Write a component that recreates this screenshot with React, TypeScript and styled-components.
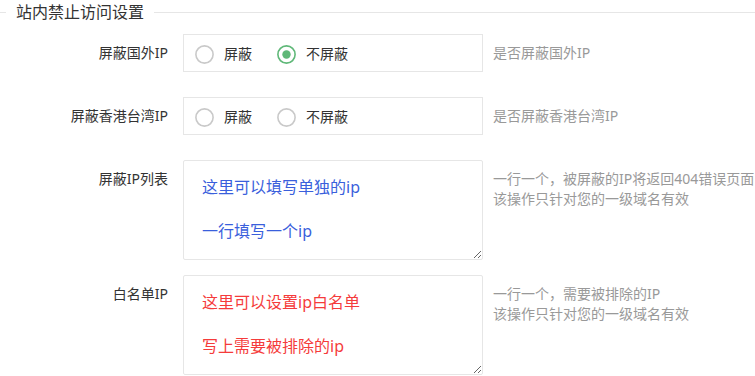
import * as React from "react";
import styled, { createGlobalStyle } from "styled-components";

const GlobalStyle = createGlobalStyle`
  body {
    margin: 0;
    background: #fff;
    font-family: "Noto Sans", "Noto Sans CJK SC", sans-serif;
  }
`;

const Fieldset = styled.fieldset`
  margin: 0;
  padding: 10px 0 0 0;
  border: none;
  border-top: 1px solid #e6e6e6;
  width: 755px;
  box-sizing: border-box;
`;

const Legend = styled.legend`
  margin-left: 6px;
  padding: 0 10px;
  font-size: 16px;
  line-height: 24px;
  color: #333;
`;

const FormItem = styled.div<{ $gap: number }>`
  display: flex;
  align-items: flex-start;
  margin-bottom: ${(p) => p.$gap}px;
`;

const Label = styled.label`
  width: 183px;
  box-sizing: border-box;
  flex-shrink: 0;
  padding: 9px 15px 9px 0;
  text-align: right;
  font-size: 14px;
  line-height: 20px;
  color: #333;
`;

const RadioBox = styled.div`
  width: 300px;
  height: 38px;
  box-sizing: border-box;
  border: 1px solid #e6e6e6;
  display: flex;
  align-items: center;
  padding: 2px 0 0 11px;
`;

const RadioOption = styled.span`
  display: inline-flex;
  align-items: center;
  gap: 10px;
  margin-right: 25px;
  font-size: 14px;
  line-height: 20px;
  color: #333;
  cursor: pointer;
`;

const Hint = styled.div`
  margin-left: 10px;
  padding: 9px 0;
  font-size: 14px;
  line-height: 20px;
  color: #999;
  white-space: nowrap;
`;

const TextArea = styled.textarea<{ $color: string }>`
  width: 300px;
  height: 100px;
  box-sizing: border-box;
  border: 1px solid #e6e6e6;
  border-radius: 2px;
  padding: 15px 18px;
  margin: 0;
  font-family: "Noto Sans", "Noto Sans CJK SC", sans-serif;
  font-size: 16px;
  line-height: 22px;
  color: ${(p) => p.$color};
  outline: none;
  display: block;
`;

const RadioIcon = ({ checked }: { checked?: boolean }) => (
  <svg width="19" height="19" viewBox="0 0 19 19">
    <circle
      cx="9.5"
      cy="9.5"
      r="8.6"
      fill="none"
      stroke={checked ? "#5FB878" : "#c9c9c9"}
      strokeWidth="1.6"
    />
    {checked && <circle cx="9.5" cy="9.5" r="4.2" fill="#5FB878" />}
  </svg>
);

const Radio = ({ label, checked }: { label: string; checked?: boolean }) => (
  <RadioOption>
    <RadioIcon checked={checked} />
    {label}
  </RadioOption>
);

const App = () => {
  return (
    <>
      <GlobalStyle />
      <Fieldset>
        <Legend>站内禁止访问设置</Legend>
        <FormItem $gap={25}>
          <Label>屏蔽国外IP</Label>
          <RadioBox>
            <Radio label="屏蔽" />
            <Radio label="不屏蔽" checked />
          </RadioBox>
          <Hint>是否屏蔽国外IP</Hint>
        </FormItem>
        <FormItem $gap={25}>
          <Label>屏蔽香港台湾IP</Label>
          <RadioBox>
            <Radio label="屏蔽" />
            <Radio label="不屏蔽" />
          </RadioBox>
          <Hint>是否屏蔽香港台湾IP</Hint>
        </FormItem>
        <FormItem $gap={15}>
          <Label>屏蔽IP列表</Label>
          <TextArea
            $color="#3a5fdc"
            defaultValue={"这里可以填写单独的ip\n\n一行填写一个ip"}
          />
          <Hint>
            一行一个，被屏蔽的IP将返回404错误页面
            <br />
            该操作只针对您的一级域名有效
          </Hint>
        </FormItem>
        <FormItem $gap={0}>
          <Label>白名单IP</Label>
          <TextArea
            $color="#f53b3b"
            defaultValue={"这里可以设置ip白名单\n\n写上需要被排除的ip"}
          />
          <Hint>
            一行一个，需要被排除的IP
            <br />
            该操作只针对您的一级域名有效
          </Hint>
        </FormItem>
      </Fieldset>
    </>
  );
};

export default App;
